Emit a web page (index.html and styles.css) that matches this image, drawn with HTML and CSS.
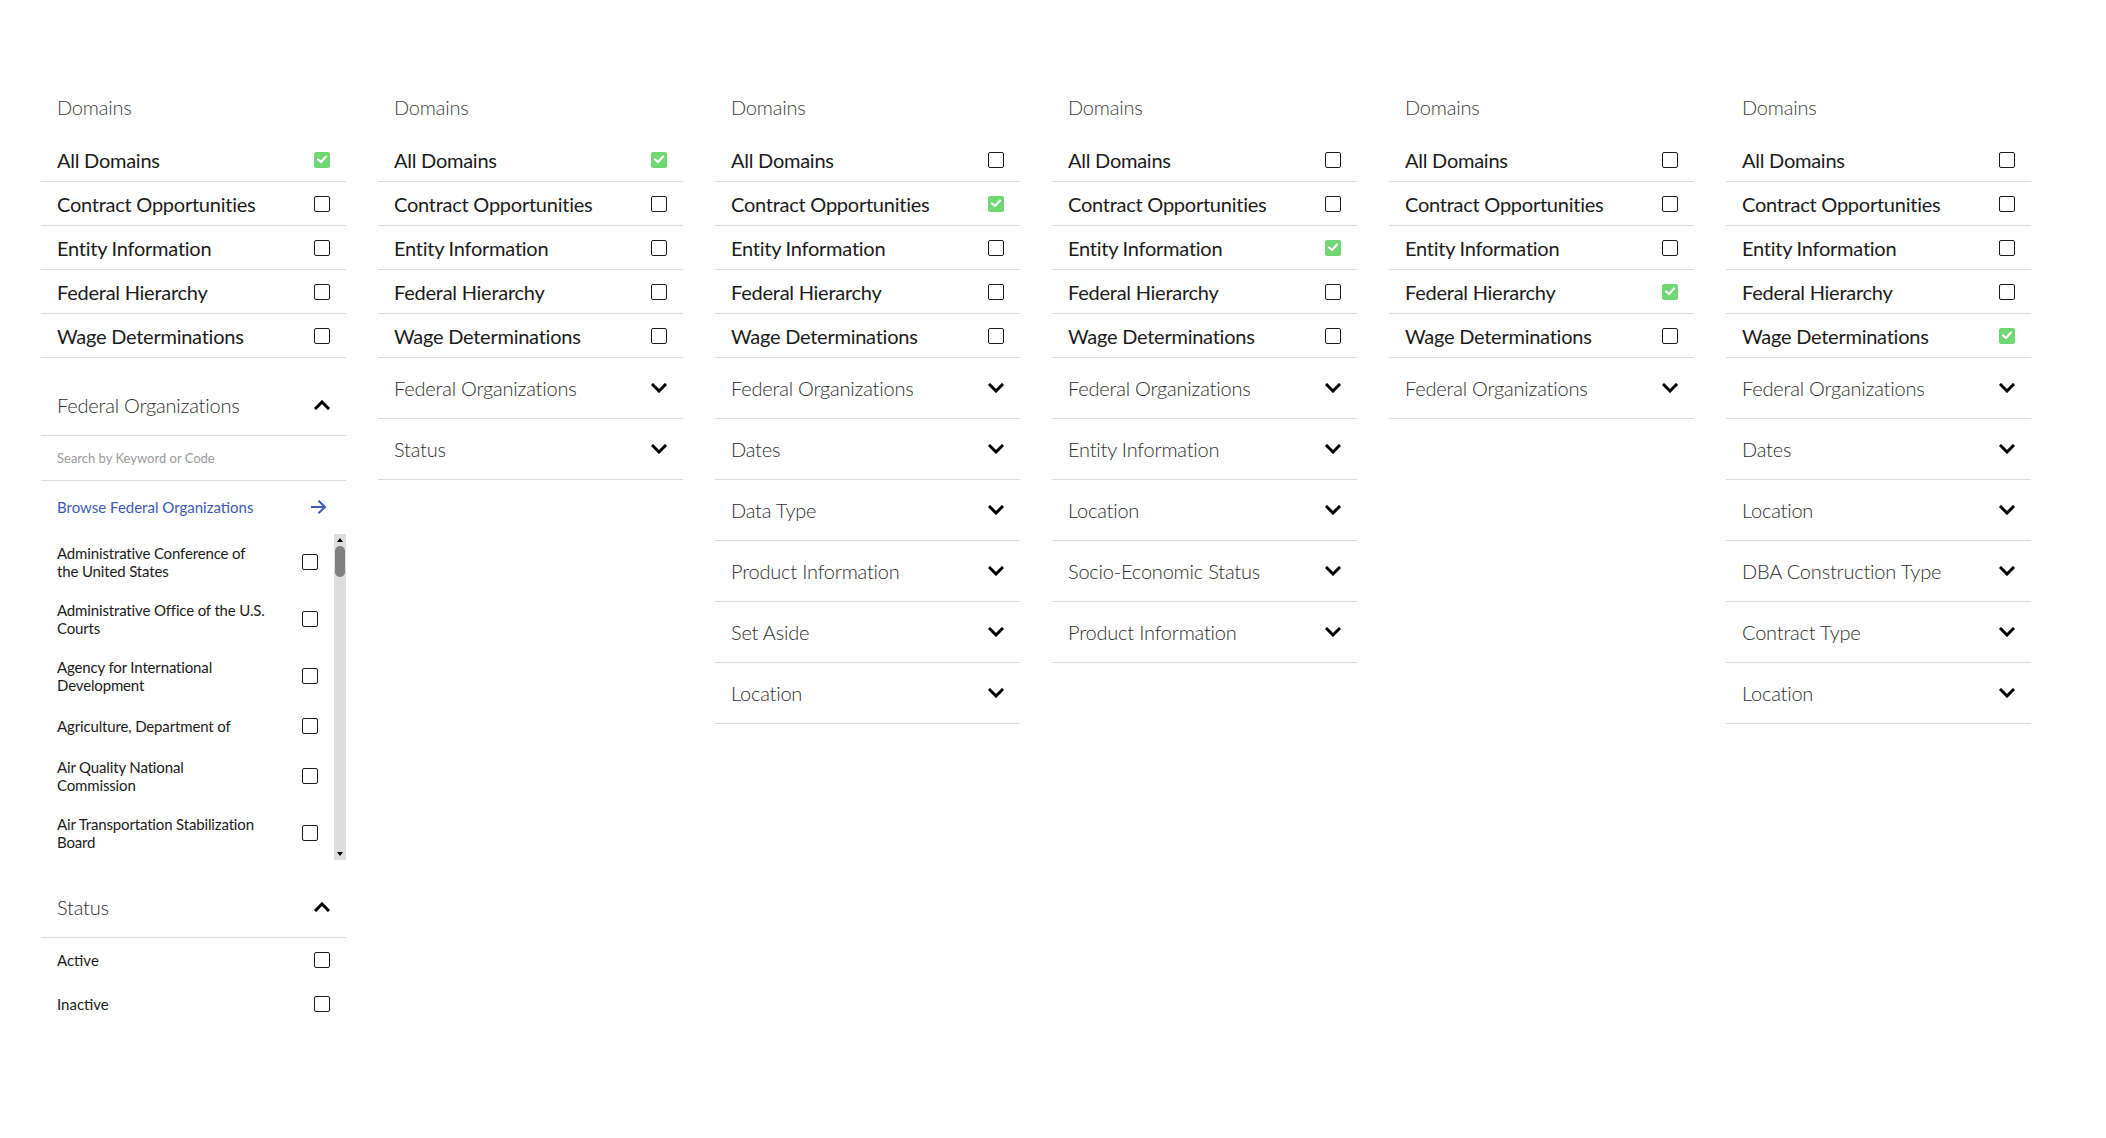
FILE: index.html
```html
<!DOCTYPE html>
<html lang="en">
<head>
<meta charset="utf-8">
<title>Search Filters</title>
<link rel="stylesheet" href="styles.css">
</head>
<body>
<div class="page">

  <!-- Column 1 -->
  <section class="col">
    <div class="label">Domains</div>
    <ul class="domains">
      <li class="row"><span>All Domains</span><span class="cb on"><svg viewBox="0 0 16 16"><polyline points="4,8.5 7,11 12,5.5"/></svg></span></li>
      <li class="row"><span>Contract Opportunities</span><span class="cb"></span></li>
      <li class="row"><span>Entity Information</span><span class="cb"></span></li>
      <li class="row"><span>Federal Hierarchy</span><span class="cb"></span></li>
      <li class="row"><span>Wage Determinations</span><span class="cb"></span></li>
    </ul>

    <div class="acc open"><span>Federal Organizations</span><svg class="chev" viewBox="0 0 16 10"><polyline points="2,8 8,2 14,8"/></svg></div>
    <div class="search">Search by Keyword or Code</div>
    <div class="browse"><span>Browse Federal Organizations</span><svg class="arrow" viewBox="0 0 16 14"><line x1="1" y1="7" x2="15" y2="7"/><polyline points="8.5,0.8 15,7 8.5,13.2"/></svg></div>
    <div class="scrollbox">
      <ul class="orgs">
        <li class="org"><span>Administrative Conference of<br>the United States</span><span class="cb"></span></li>
        <li class="org"><span>Administrative Office of the U.S.<br>Courts</span><span class="cb"></span></li>
        <li class="org"><span>Agency for International<br>Development</span><span class="cb"></span></li>
        <li class="org single"><span>Agriculture, Department of</span><span class="cb"></span></li>
        <li class="org"><span>Air Quality National<br>Commission</span><span class="cb"></span></li>
        <li class="org"><span>Air Transportation Stabilization<br>Board</span><span class="cb"></span></li>
      </ul>
      <div class="scrollbar">
        <span class="up"></span>
        <span class="thumb"></span>
        <span class="fill"></span>
        <span class="down"></span>
      </div>
    </div>

    <div class="acc open"><span>Status</span><svg class="chev" viewBox="0 0 16 10"><polyline points="2,8 8,2 14,8"/></svg></div>
    <ul class="status">
      <li class="srow"><span>Active</span><span class="cb"></span></li>
      <li class="srow"><span>Inactive</span><span class="cb"></span></li>
    </ul>
  </section>

  <!-- Column 2 -->
  <section class="col">
    <div class="label">Domains</div>
    <ul class="domains">
      <li class="row"><span>All Domains</span><span class="cb on"><svg viewBox="0 0 16 16"><polyline points="4,8.5 7,11 12,5.5"/></svg></span></li>
      <li class="row"><span>Contract Opportunities</span><span class="cb"></span></li>
      <li class="row"><span>Entity Information</span><span class="cb"></span></li>
      <li class="row"><span>Federal Hierarchy</span><span class="cb"></span></li>
      <li class="row"><span>Wage Determinations</span><span class="cb"></span></li>
    </ul>
    <div class="acc"><span>Federal Organizations</span><svg class="chev" viewBox="0 0 16 10"><polyline points="2,2 8,8 14,2"/></svg></div>
    <div class="acc"><span>Status</span><svg class="chev" viewBox="0 0 16 10"><polyline points="2,2 8,8 14,2"/></svg></div>
  </section>

  <!-- Column 3 -->
  <section class="col">
    <div class="label">Domains</div>
    <ul class="domains">
      <li class="row"><span>All Domains</span><span class="cb"></span></li>
      <li class="row"><span>Contract Opportunities</span><span class="cb on"><svg viewBox="0 0 16 16"><polyline points="4,8.5 7,11 12,5.5"/></svg></span></li>
      <li class="row"><span>Entity Information</span><span class="cb"></span></li>
      <li class="row"><span>Federal Hierarchy</span><span class="cb"></span></li>
      <li class="row"><span>Wage Determinations</span><span class="cb"></span></li>
    </ul>
    <div class="acc"><span>Federal Organizations</span><svg class="chev" viewBox="0 0 16 10"><polyline points="2,2 8,8 14,2"/></svg></div>
    <div class="acc"><span>Dates</span><svg class="chev" viewBox="0 0 16 10"><polyline points="2,2 8,8 14,2"/></svg></div>
    <div class="acc"><span>Data Type</span><svg class="chev" viewBox="0 0 16 10"><polyline points="2,2 8,8 14,2"/></svg></div>
    <div class="acc"><span>Product Information</span><svg class="chev" viewBox="0 0 16 10"><polyline points="2,2 8,8 14,2"/></svg></div>
    <div class="acc"><span>Set Aside</span><svg class="chev" viewBox="0 0 16 10"><polyline points="2,2 8,8 14,2"/></svg></div>
    <div class="acc"><span>Location</span><svg class="chev" viewBox="0 0 16 10"><polyline points="2,2 8,8 14,2"/></svg></div>
  </section>

  <!-- Column 4 -->
  <section class="col">
    <div class="label">Domains</div>
    <ul class="domains">
      <li class="row"><span>All Domains</span><span class="cb"></span></li>
      <li class="row"><span>Contract Opportunities</span><span class="cb"></span></li>
      <li class="row"><span>Entity Information</span><span class="cb on"><svg viewBox="0 0 16 16"><polyline points="4,8.5 7,11 12,5.5"/></svg></span></li>
      <li class="row"><span>Federal Hierarchy</span><span class="cb"></span></li>
      <li class="row"><span>Wage Determinations</span><span class="cb"></span></li>
    </ul>
    <div class="acc"><span>Federal Organizations</span><svg class="chev" viewBox="0 0 16 10"><polyline points="2,2 8,8 14,2"/></svg></div>
    <div class="acc"><span>Entity Information</span><svg class="chev" viewBox="0 0 16 10"><polyline points="2,2 8,8 14,2"/></svg></div>
    <div class="acc"><span>Location</span><svg class="chev" viewBox="0 0 16 10"><polyline points="2,2 8,8 14,2"/></svg></div>
    <div class="acc"><span>Socio-Economic Status</span><svg class="chev" viewBox="0 0 16 10"><polyline points="2,2 8,8 14,2"/></svg></div>
    <div class="acc"><span>Product Information</span><svg class="chev" viewBox="0 0 16 10"><polyline points="2,2 8,8 14,2"/></svg></div>
  </section>

  <!-- Column 5 -->
  <section class="col">
    <div class="label">Domains</div>
    <ul class="domains">
      <li class="row"><span>All Domains</span><span class="cb"></span></li>
      <li class="row"><span>Contract Opportunities</span><span class="cb"></span></li>
      <li class="row"><span>Entity Information</span><span class="cb"></span></li>
      <li class="row"><span>Federal Hierarchy</span><span class="cb on"><svg viewBox="0 0 16 16"><polyline points="4,8.5 7,11 12,5.5"/></svg></span></li>
      <li class="row"><span>Wage Determinations</span><span class="cb"></span></li>
    </ul>
    <div class="acc"><span>Federal Organizations</span><svg class="chev" viewBox="0 0 16 10"><polyline points="2,2 8,8 14,2"/></svg></div>
  </section>

  <!-- Column 6 -->
  <section class="col">
    <div class="label">Domains</div>
    <ul class="domains">
      <li class="row"><span>All Domains</span><span class="cb"></span></li>
      <li class="row"><span>Contract Opportunities</span><span class="cb"></span></li>
      <li class="row"><span>Entity Information</span><span class="cb"></span></li>
      <li class="row"><span>Federal Hierarchy</span><span class="cb"></span></li>
      <li class="row"><span>Wage Determinations</span><span class="cb on"><svg viewBox="0 0 16 16"><polyline points="4,8.5 7,11 12,5.5"/></svg></span></li>
    </ul>
    <div class="acc"><span>Federal Organizations</span><svg class="chev" viewBox="0 0 16 10"><polyline points="2,2 8,8 14,2"/></svg></div>
    <div class="acc"><span>Dates</span><svg class="chev" viewBox="0 0 16 10"><polyline points="2,2 8,8 14,2"/></svg></div>
    <div class="acc"><span>Location</span><svg class="chev" viewBox="0 0 16 10"><polyline points="2,2 8,8 14,2"/></svg></div>
    <div class="acc"><span>DBA Construction Type</span><svg class="chev" viewBox="0 0 16 10"><polyline points="2,2 8,8 14,2"/></svg></div>
    <div class="acc"><span>Contract Type</span><svg class="chev" viewBox="0 0 16 10"><polyline points="2,2 8,8 14,2"/></svg></div>
    <div class="acc"><span>Location</span><svg class="chev" viewBox="0 0 16 10"><polyline points="2,2 8,8 14,2"/></svg></div>
  </section>

</div>
</body>
</html>
```

FILE: styles.css
```css
* { box-sizing: border-box; }

html, body {
  margin: 0;
  padding: 0;
  background: #ffffff;
}

body {
  font-family: "Source Sans Pro", Lato, "Noto Sans", sans-serif;
  color: #1b1b1b;
}

ul { list-style: none; margin: 0; padding: 0; }

.page {
  display: flex;
  align-items: flex-start;
  gap: 32px;
  padding: 95px 0 0 41px;
}

.col {
  width: 305px;
  flex: 0 0 305px;
  display: flex;
  flex-direction: column;
}

.label {
  padding: 0 16px;
  font-size: 20px;
  line-height: 24px;
  font-weight: 300;
  color: #3c3c3c;
  letter-spacing: -0.2px;
  margin-bottom: 19px;
}

.row {
  height: 44px;
  border-bottom: 1px solid #dcdcdc;
  display: flex;
  align-items: center;
  justify-content: space-between;
  padding: 0 16px;
  font-size: 20px;
  line-height: 24px;
  letter-spacing: -0.25px;
}

.cb {
  width: 16px;
  height: 16px;
  flex: 0 0 16px;
  border: 1.5px solid #1b1b1b;
  border-radius: 2px;
  display: block;
}

.cb.on {
  background: #70d775;
  border-color: #70d775;
  position: relative;
}

.cb.on svg {
  position: absolute;
  left: -1.5px;
  top: -1.5px;
  width: 16px;
  height: 16px;
  fill: none;
  stroke: #ffffff;
  stroke-width: 2.2;
  stroke-linecap: round;
  stroke-linejoin: round;
}

.acc {
  height: 61px;
  border-bottom: 1px solid #dcdcdc;
  display: flex;
  align-items: center;
  justify-content: space-between;
  padding: 0 16px;
  font-size: 20px;
  line-height: 24px;
  font-weight: 300;
  letter-spacing: -0.2px;
  color: #2e2e2e;
}

.acc.open {
  margin-top: 17px;
}

.chev {
  width: 16px;
  height: 10px;
  fill: none;
  stroke: #000000;
  stroke-width: 3;
  stroke-linecap: square;
  stroke-linejoin: miter;
}

.search {
  height: 45px;
  border-bottom: 1px solid #dcdcdc;
  display: flex;
  align-items: center;
  padding: 0 16px;
  font-size: 13px;
  line-height: 16px;
  color: #9a9a9a;
}

.browse {
  height: 53px;
  display: flex;
  align-items: center;
  justify-content: space-between;
  padding: 0 20px 2px 16px;
  font-size: 15px;
  line-height: 18px;
  color: #3d5ab8;
}

.arrow {
  width: 16px;
  height: 14px;
  fill: none;
  stroke: #3d5ab8;
  stroke-width: 2;
}

.scrollbox {
  display: flex;
  height: 326px;
}

.orgs {
  flex: 1;
  overflow: hidden;
}

.org {
  display: flex;
  align-items: center;
  justify-content: space-between;
  padding: 10px 16px 11px;
  font-size: 15px;
  line-height: 18px;
  letter-spacing: -0.15px;
}

.org.single {
  min-height: 43px;
}

.scrollbar {
  width: 12px;
  flex: 0 0 12px;
  background: #dddddd;
  display: flex;
  flex-direction: column;
  align-items: center;
}

.up, .down {
  width: 0;
  height: 0;
  border-left: 3px solid transparent;
  border-right: 3px solid transparent;
  margin: 4px 0;
}

.up { border-bottom: 4px solid #000; }
.down { border-top: 4px solid #000; }

.thumb {
  width: 10px;
  height: 31px;
  border-radius: 5px;
  background: #808080;
}

.fill { flex: 1; }

.srow {
  height: 44px;
  display: flex;
  align-items: center;
  justify-content: space-between;
  padding: 0 16px;
  font-size: 15px;
  line-height: 18px;
}
```
